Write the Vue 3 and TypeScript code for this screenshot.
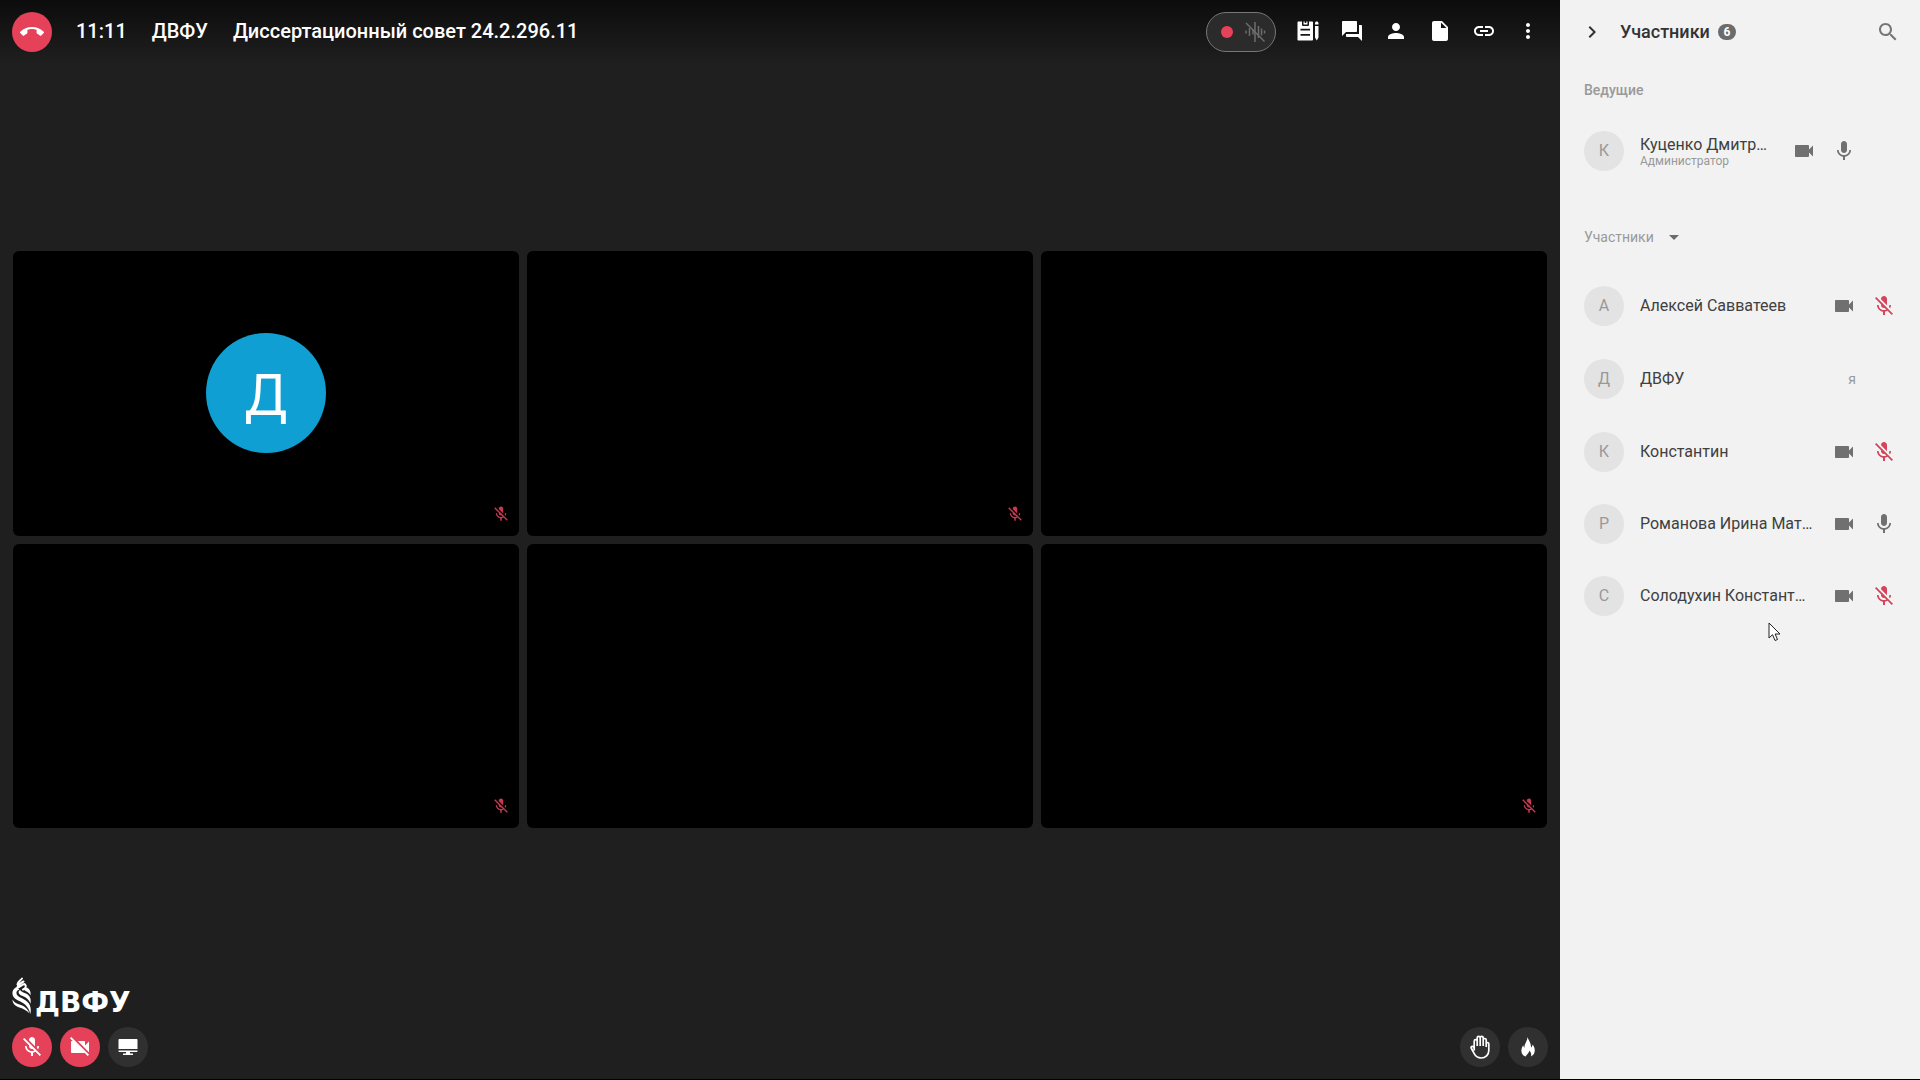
<script setup lang="ts">
interface Tile {
  id: number
  initial?: string
  muted: boolean
}

interface Person {
  name: string
  initial: string
  role?: string
  mic?: 'on' | 'off'
  me?: boolean
}

const micOn =
  'M12 14c1.66 0 2.99-1.34 2.99-3L15 5c0-1.66-1.34-3-3-3S9 3.34 9 5v6c0 1.66 1.34 3 3 3zm5.3-3c0 3-2.54 5.1-5.3 5.1S6.7 14 6.7 11H5c0 3.41 2.72 6.23 6 6.72V21h2v-3.28c3.28-.48 6-3.3 6-6.72h-1.7z'
const micOff =
  'M19 11h-1.7c0 .74-.16 1.43-.43 2.05l1.23 1.23c.56-.98.9-2.09.9-3.28zm-4.02.17c0-.06.02-.11.02-.17V5c0-1.66-1.34-3-3-3S9 3.34 9 5v.18l5.98 5.99zM4.27 3L3 4.27l6.01 6.01V11c0 1.66 1.33 3 2.99 3 .22 0 .44-.03.65-.08l1.66 1.66c-.71.33-1.5.52-2.31.52-2.76 0-5.3-2.1-5.3-5.1H5c0 3.41 2.72 6.23 6 6.72V21h2v-3.28c.91-.13 1.77-.45 2.54-.9L19.73 21 21 19.73 4.27 3z'
const camera =
  'M17 10.5V7c0-.55-.45-1-1-1H4c-.55 0-1 .45-1 1v10c0 .55.45 1 1 1h12c.55 0 1-.45 1-1v-3.5l4 4v-11l-4 4z'
const cameraOff =
  'M21 6.5l-4 4V7c0-.55-.45-1-1-1H9.82L21 17.18V6.5zM3.27 2L2 3.27 4.73 6H4c-.55 0-1 .45-1 1v10c0 .55.45 1 1 1h12c.21 0 .39-.08.54-.18L19.73 21 21 19.73 3.27 2z'

const tools = [
  {
    label: 'Повестка',
    path: 'M3 2.5h3v3.2c0 .7.5 1.3 1.300 1.300h4.400c.8 0 1.300-.6 1.300-1.300V2.500h3c.6 0 1 .4 1 1V20.500c0 .6-.4 1-1 1H2.500c-.6 0-1-.4-1-1V3.500c0-.6.4-1 1-1zM4.500 9.700v1.800h9.500V9.700zM4.500 15v1.800h9.500V15zM7.500 2.500h1.200v1.500h1.600V2.500h1.200v3H7.500zM19 4.200c0-1 .7-1.700 1.700-1.700s1.800.7 1.800 1.700V5.500H19zM19 7h3.500v11.500l-1.700 3-1.800-3z',
  },
  {
    label: 'Чат',
    path: 'M21 6h-2v9H6v2c0 .55.45 1 1 1h11l4 4V7c0-.55-.45-1-1-1zm-4 6V3c0-.55-.45-1-1-1H3c-.55 0-1 .45-1 1v14l4-4h10c.55 0 1-.45 1-1z',
  },
  {
    label: 'Участники',
    path: 'M12 12c2.210 0 4-1.790 4-4s-1.790-4-4-4-4 1.790-4 4 1.790 4 4 4zm0 2c-2.670 0-8 1.340-8 4v2h16v-2c0-2.660-5.330-4-8-4z',
  },
  {
    label: 'Документы',
    path: 'M6 2c-1.100 0-1.990.9-1.990 2L4 20c0 1.100.89 2 1.990 2H18c1.100 0 2-.9 2-2V8l-6-6H6zm7 7V3.500L18.500 9H13z',
  },
  {
    label: 'Ссылка',
    path: 'M3.900 12c0-1.710 1.390-3.100 3.100-3.100h4V7H7c-2.760 0-5 2.240-5 5s2.240 5 5 5h4v-1.900H7c-1.710 0-3.100-1.390-3.100-3.100zM8 13h8v-2H8v2zm9-6h-4v1.900h4c1.710 0 3.100 1.390 3.100 3.100s-1.390 3.100-3.100 3.100h-4V17h4c2.760 0 5-2.240 5-5s-2.240-5-5-5z',
  },
  {
    label: 'Ещё',
    path: 'M12 8c1.100 0 2-.9 2-2s-.9-2-2-2-2 .9-2 2 .9 2 2 2zm0 2c-1.100 0-2 .9-2 2s.9 2 2 2 2-.9 2-2-.9-2-2-2zm0 6c-1.100 0-2 .9-2 2s.9 2 2 2 2-.9 2-2-.9-2-2-2z',
  },
]

const tiles: Tile[] = [
  { id: 1, initial: 'Д', muted: true },
  { id: 2, muted: true },
  { id: 3, muted: false },
  { id: 4, muted: true },
  { id: 5, muted: false },
  { id: 6, muted: true },
]

const hosts: Person[] = [
  { name: 'Куценко Дмитр…', initial: 'К', role: 'Администратор', mic: 'on' },
]

const people: Person[] = [
  { name: 'Алексей Савватеев', initial: 'А', mic: 'off' },
  { name: 'ДВФУ', initial: 'Д', me: true },
  { name: 'Константин', initial: 'К', mic: 'off' },
  { name: 'Романова Ирина Мат…', initial: 'Р', mic: 'on' },
  { name: 'Солодухин Констант…', initial: 'С', mic: 'off' },
]
</script>

<template>
  <div class="app">
    <main class="room">
      <header class="topbar">
        <button class="round red" aria-label="Завершить звонок">
          <svg viewBox="0 0 24 24">
            <path d="M12 9c-1.600 0-3.150.25-4.600.72v3.100c0 .39-.23.74-.56.9-.98.49-1.870 1.120-2.660 1.850-.18.18-.43.28-.7.28-.28 0-.53-.11-.71-.29L.29 13.080c-.18-.17-.29-.42-.29-.7 0-.28.11-.53.29-.71C3.340 8.780 7.460 7 12 7s8.660 1.780 11.710 4.670c.18.18.29.43.29.71 0 .28-.11.53-.29.71l-2.480 2.480c-.18.18-.43.29-.71.29-.27 0-.52-.11-.7-.28-.79-.74-1.690-1.360-2.670-1.850-.33-.16-.56-.5-.56-.9v-3.100C15.150 9.250 13.600 9 12 9z" />
          </svg>
        </button>
        <div class="heading">
          <time>11:11</time>
          <span>ДВФУ</span>
          <h1>Диссертационный совет 24.2.296.11</h1>
        </div>
        <div class="record">
          <span class="dot"></span>
          <svg viewBox="0 0 24 24">
            <path d="M3 10.500v3M6.500 8v8M10 9.500v5M12 2v20M15.500 6v12M18.500 8.500v7M21.500 10.500v3" />
            <path d="M3 3l18.500 18.500" />
          </svg>
        </div>
        <nav class="tools">
          <button v-for="tool in tools" :key="tool.label" class="tool" :aria-label="tool.label">
            <svg viewBox="0 0 24 24"><path :d="tool.path" fill-rule="evenodd" /></svg>
          </button>
        </nav>
      </header>

      <section class="tiles">
        <article v-for="tile in tiles" :key="tile.id" class="tile">
          <span v-if="tile.initial" class="big-avatar">{{ tile.initial }}</span>
          <svg v-if="tile.muted" class="tile-mic" viewBox="0 0 24 24"><path :d="micOff" /></svg>
        </article>
      </section>

      <footer class="bottom">
        <div class="brand">
          <svg viewBox="0 0 20 38">
            <path class="strand" d="M10 1.500c-2 2.500-4 3-4.500 6M11.500 4.500c-3 1.500-5 2.500-6 5.500M6 10.500c2.500-.5 4-3.500 6.500-3.500M13 7.500c1.500 1.500 1 4-2 5" />
            <path d="M4.500 10C.5 12-.3 15.500 1 19c1.500 4 8 5 12 8.500 2.700 2.500 4.500 5.500 5.300 9.500 1.200-5 .2-9.500-3.300-12.500C11 21 5 20 4.500 16.500 4 14 6 13 7.500 12.500z" />
            <path d="M8 13c-2.500 1.500-1.500 4.500 2 5.800 4 1.500 7.300 4 8.500 8 .8-5-.5-8-4-10C12 15.500 9.500 15 8 13z" />
            <path d="M12 12.500c1 2.200 5 2 6.500 6 .5-3.500-.5-6.500-3.500-8z" />
            <path d="M.5 22.500c0 4.500 3 6.500 7 8 4 1.400 7.500 3 10 6-1.500-4.500-4.500-7-8.500-8.500-4-1.300-7-2.500-8.500-5.500z" />
          </svg>
          <span>ДВФУ</span>
        </div>
        <div class="controls">
          <button class="round red" aria-label="Включить микрофон">
            <svg viewBox="0 0 24 24"><path :d="micOff" /></svg>
          </button>
          <button class="round red" aria-label="Включить камеру">
            <svg viewBox="0 0 24 24"><path :d="cameraOff" /></svg>
          </button>
          <button class="round" aria-label="Показать экран">
            <svg viewBox="0 0 24 24">
              <path d="M3.500 4h17c.6 0 1 .4 1 1v9h-19V5c0-.6.4-1 1-1zM2.500 15.500h19v.5c0 .6-.4 1-1 1H14v1.500h3V20H7v-1.500h3V17H3.500c-.6 0-1-.4-1-1z" />
            </svg>
          </button>
          <button class="round push" aria-label="Поднять руку">
            <svg class="hand" viewBox="0 0 24 24">
              <path d="M6.200 15.500V6.200a1.500 1.500 0 0 1 3 0V11M9.200 11V2.800a1.500 1.500 0 0 1 3 0V11M12.200 11V2.800a1.500 1.500 0 0 1 3 0V11M15.200 11V5a1.500 1.500 0 0 1 3 0V12M18.200 12V8.800a1.300 1.300 0 0 1 2.600 0V15.500c0 4.300-3.300 7.500-7.600 7.500-3.200 0-5.600-1.600-7-4.300L3.200 13c-.7-1.300 1.200-2.300 2-1.200l1 1.500" />
            </svg>
          </button>
          <button class="round" aria-label="Реакции">
            <svg viewBox="0 0 24 24">
              <path d="M11.500 2c.5 2.500 3.700 5.500 3.500 10.500 1-.7 1.500-1.900 1.500-3C18.200 11.500 19 14 18.700 16.300c-.3 2.400-1.700 4.300-3.700 5.200.7-2.500-.2-4.500-1.700-6-.1 2-1.800 3.500-3.800 6C7 20.700 5.500 18.700 5.400 16c-.1-2.300.7-4.200 1.900-5.800.1 1.200.5 2.200 1.200 2.800C8 9 11.500 6 11.500 2z" />
            </svg>
          </button>
        </div>
      </footer>
    </main>

    <aside class="panel">
      <header class="panel-head">
        <button class="icon-btn dark" aria-label="Свернуть">
          <svg viewBox="0 0 24 24"><path d="M10 6L8.590 7.410 13.170 12l-4.580 4.590L10 18l6-6z" /></svg>
        </button>
        <h2>Участники</h2>
        <span class="badge">6</span>
        <button class="icon-btn search" aria-label="Поиск">
          <svg viewBox="0 0 24 24">
            <path d="M15.500 14h-.79l-.28-.27C15.410 12.590 16 11.110 16 9.500 16 5.910 13.090 3 9.500 3S3 5.910 3 9.500 5.910 16 9.500 16c1.610 0 3.090-.59 4.230-1.570l.27.28v.79l5 4.990L20.490 19l-4.990-5zm-6 0C7.010 14 5 11.990 5 9.500S7.010 5 9.500 5 14 7.010 14 9.500 11.990 14 9.500 14z" />
          </svg>
        </button>
      </header>

      <h3 class="group-title hosts-title">Ведущие</h3>
      <ul class="list">
        <li v-for="p in hosts" :key="p.name" class="person host">
          <span class="avatar">{{ p.initial }}</span>
          <div class="who">
            <span class="name">{{ p.name }}</span>
            <span class="role">{{ p.role }}</span>
          </div>
          <svg class="state" viewBox="0 0 24 24"><path :d="camera" /></svg>
          <svg class="state" viewBox="0 0 24 24"><path :d="micOn" /></svg>
        </li>
      </ul>

      <button class="group-title members-title">
        Участники
        <svg viewBox="0 0 24 24"><path d="M7 10l5 5 5-5z" /></svg>
      </button>
      <ul class="list">
        <li v-for="p in people" :key="p.name" class="person" :class="{ self: p.me }">
          <span class="avatar">{{ p.initial }}</span>
          <div class="who"><span class="name">{{ p.name }}</span></div>
          <span v-if="p.me" class="me">я</span>
          <template v-else>
            <svg class="state" viewBox="0 0 24 24"><path :d="camera" /></svg>
            <svg class="state" :class="{ off: p.mic === 'off' }" viewBox="0 0 24 24">
              <path :d="p.mic === 'off' ? micOff : micOn" />
            </svg>
          </template>
        </li>
      </ul>
      <svg class="cursor" viewBox="0 0 13 20">
        <path d="M1 1v15l3.500-3.300L7 18.500l2.500-1-2.400-5.500H12z" />
      </svg>
    </aside>
  </div>
</template>

<style>
body {
  margin: 0;
  background: #000;
}
</style>

<style scoped>
.app {
  display: flex;
  box-sizing: border-box;
  min-height: 100vh;
  border-bottom: 1px solid #000;
  font-family: Roboto, "Liberation Sans", sans-serif;
}
svg {
  display: block;
  flex: none;
  width: 24px;
  height: 24px;
  fill: currentColor;
}
button {
  padding: 0;
  border: 0;
  background: none;
  color: inherit;
  font: inherit;
}
h1,
h2,
h3,
ul {
  margin: 0;
  padding: 0;
  font: inherit;
  list-style: none;
}
.room {
  flex: 1;
  min-width: 0;
  display: grid;
  grid-template-columns: minmax(0, 1fr);
  grid-template-rows: 1fr auto 1fr;
  background: #1f1f1f;
  color: #fff;
}
.topbar {
  display: flex;
  align-items: center;
  align-self: start;
  height: 64px;
  padding: 0 20px 0 12px;
  background: linear-gradient(#0c0c0c, #1f1f1f);
}
.heading {
  display: flex;
  gap: 25px;
  margin-left: 24px;
  padding-bottom: 2px;
  font-size: 20px;
  font-weight: 500;
  line-height: 24px;
  white-space: nowrap;
}
.record {
  display: flex;
  align-items: center;
  gap: 10px;
  box-sizing: border-box;
  width: 70px;
  height: 40px;
  margin-left: auto;
  padding-left: 14px;
  border: 1px solid #777;
  border-radius: 20px;
  background: #2b2b2b;
}
.record .dot {
  width: 12px;
  height: 12px;
  border-radius: 50%;
  background: #e8415a;
}
.record svg {
  fill: none;
  stroke: #6e6e6e;
  stroke-width: 1.5;
}
.tools {
  display: flex;
  gap: 20px;
  margin-left: 20px;
  padding-bottom: 2px;
}
.round {
  display: flex;
  align-items: center;
  justify-content: center;
  flex: none;
  width: 40px;
  height: 40px;
  border-radius: 50%;
  background: #303030;
  color: #fff;
}
.round.red {
  background: #e5425a;
}
.tiles {
  display: grid;
  grid-template-columns: repeat(3, minmax(0, 1fr));
  gap: 8px;
  padding: 0 13px;
}
.tile {
  position: relative;
  display: flex;
  align-items: center;
  justify-content: center;
  aspect-ratio: 16 / 9;
  border-radius: 6px;
  background: #000;
}
.big-avatar {
  width: 120px;
  border-radius: 50%;
  background: #0f9fd2;
  font-family: "Noto Sans", sans-serif;
  font-size: 56px;
  line-height: 120px;
  text-align: center;
}
.tile-mic {
  position: absolute;
  right: 9px;
  bottom: 13px;
  width: 18px;
  height: 18px;
  color: #c73a50;
}
.bottom {
  align-self: end;
  padding: 0 12px 12px;
}
.brand {
  display: flex;
  align-items: flex-end;
  gap: 3px;
  margin-bottom: 12px;
  font-family: "DejaVu Sans", sans-serif;
  font-size: 28px;
  font-weight: 700;
  line-height: 24px;
}
.brand svg {
  width: 20px;
  height: 38px;
}
.brand .strand {
  fill: none;
  stroke: currentColor;
  stroke-width: 2;
  stroke-linecap: round;
}
.controls {
  display: flex;
  gap: 8px;
}
.push {
  margin-left: auto;
}
.hand {
  fill: none;
  stroke: currentColor;
  stroke-width: 1.7;
}
.panel {
  position: relative;
  flex: none;
  box-sizing: border-box;
  width: 360px;
  padding: 0 20px 0 24px;
  background: #f2f2f2;
  color: #404040;
}
.panel-head {
  display: flex;
  align-items: center;
  height: 64px;
  margin-left: -4px;
  color: #333;
}
.panel-head h2 {
  margin-left: 16px;
  font-size: 18px;
  font-weight: 500;
  line-height: 24px;
}
.badge {
  width: 18px;
  margin-left: 8px;
  border-radius: 8px;
  background: #6b6b6b;
  color: #fff;
  font-size: 12px;
  font-weight: 700;
  line-height: 16px;
  text-align: center;
}
.search {
  margin-left: auto;
  color: #757575;
}
.group-title {
  display: flex;
  align-items: center;
  height: 24px;
  color: #999;
  font-size: 14px;
  line-height: 24px;
}
.hosts-title {
  margin: 14px 0 13px;
  font-weight: 500;
}
.members-title {
  gap: 8px;
  margin: 38px 0 21px;
}
.members-title svg {
  color: #6b6b6b;
}
.list {
  padding-right: 4px;
}
.person {
  display: flex;
  align-items: center;
  gap: 16px;
  height: 72px;
}
.person.self {
  height: 74px;
}
.host {
  padding-right: 40px;
}
.avatar {
  flex: none;
  width: 40px;
  border-radius: 50%;
  background: #e3e3e3;
  color: #999;
  font-size: 16px;
  line-height: 40px;
  text-align: center;
}
.who {
  flex: 1;
  display: flex;
  flex-direction: column;
  min-width: 0;
}
.name {
  overflow: hidden;
  font-size: 16px;
  line-height: 20px;
  text-overflow: ellipsis;
  white-space: nowrap;
}
.role {
  color: #999;
  font-size: 12px;
  line-height: 12px;
}
.state {
  color: #707070;
}
.state.off {
  color: #d5455a;
}
.me {
  margin-right: 36px;
  width: 16px;
  color: #999;
  font-size: 14px;
  text-align: center;
}
.cursor {
  position: absolute;
  top: 622px;
  left: 208px;
  width: 13px;
  height: 20px;
  fill: #fff;
  stroke: #222;
  stroke-width: 1;
}
</style>
